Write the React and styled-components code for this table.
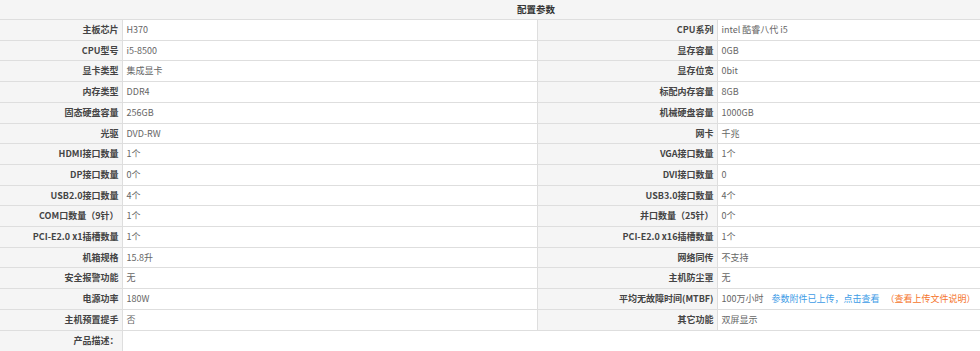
import React from "react";
import styled, { createGlobalStyle } from "styled-components";

const Global = createGlobalStyle`
  html, body { margin: 0; padding: 0; background: #fff; }
  body { font-family: "Noto Sans CJK SC", "Noto Sans", sans-serif; }
`;

const Page = styled.div`
  width: 100%;
  height: 351px;
  overflow: hidden;
`;

const Table = styled.table`
  width: 1072px;
  border-collapse: collapse;
  table-layout: fixed;
  font-size: 9px;
`;

const HeadCell = styled.th`
  height: 19px;
  padding: 0;
  background: #f5f5f5;
  border-bottom: 1px solid #dedede;
  color: #333;
  font-weight: bold;
  font-size: 9.5px;
  text-align: center;
  line-height: 19px;
`;

const Row = styled.tr`
  height: 20.7px;
`;

const Label = styled.th`
  padding: 0 3px 0 4px;
  background: #f5f5f5;
  border-bottom: 1px solid #dedede;
  border-right: 1px solid #dedede;
  color: #444;
  font-weight: bold;
  text-align: right;
  white-space: nowrap;
  line-height: 19.7px;
  height: 19.7px;
  box-sizing: border-box;
`;

const Value = styled.td`
  padding: 0 4px;
  background: #fff;
  border-bottom: 1px solid #dedede;
  border-right: ${(p) => (p.$last ? "none" : "1px solid #dedede")};
  color: #666;
  text-align: left;
  white-space: nowrap;
  line-height: 19.7px;
  height: 19.7px;
`;

const DescRow = styled.tr`
  height: 40px;
`;

const DescLabel = styled(Label)`
  vertical-align: top;
  border-bottom: none;
`;

const DescValue = styled(Value)`
  border-bottom: none;
`;

const Link = styled.a`
  color: #3d9be6;
  text-decoration: none;
  margin-left: 8px;
`;

const Note = styled.span`
  color: #f5742b;
  margin-left: 6px;
`;

const rows = [
  ["主板芯片", "H370", "CPU系列", "intel 酷睿八代 i5"],
  ["CPU型号", "i5-8500", "显存容量", "0GB"],
  ["显卡类型", "集成显卡", "显存位宽", "0bit"],
  ["内存类型", "DDR4", "标配内存容量", "8GB"],
  ["固态硬盘容量", "256GB", "机械硬盘容量", "1000GB"],
  ["光驱", "DVD-RW", "网卡", "千兆"],
  ["HDMI接口数量", "1个", "VGA接口数量", "1个"],
  ["DP接口数量", "0个", "DVI接口数量", "0"],
  ["USB2.0接口数量", "4个", "USB3.0接口数量", "4个"],
  ["COM口数量（9针）", "1个", "并口数量（25针）", "0个"],
  ["PCI-E2.0 x1插槽数量", "1个", "PCI-E2.0 x16插槽数量", "1个"],
  ["机箱规格", "15.8升", "网络同传", "不支持"],
  ["安全报警功能", "无", "主机防尘罩", "无"],
  ["电源功率", "180W", "平均无故障时间(MTBF)", "mtbf"],
  ["主机预置提手", "否", "其它功能", "双屏显示"],
];

function renderValue(v) {
  if (v === "mtbf") {
    return (
      <>
        100万小时
        <Link href="#">参数附件已上传，点击查看</Link>
        <Note>（查看上传文件说明）</Note>
      </>
    );
  }
  return v;
}

export default function App() {
  return (
    <Page>
      <Global />
      <Table>
        <colgroup>
          <col style={{ width: 122 }} />
          <col style={{ width: 415 }} />
          <col style={{ width: 180 }} />
          <col style={{ width: 355 }} />
        </colgroup>
        <thead>
          <tr>
            <HeadCell colSpan={4}>配置参数</HeadCell>
          </tr>
        </thead>
        <tbody>
          {rows.map((r) => (
            <Row key={r[0]}>
              <Label>{r[0]}</Label>
              <Value>{r[1]}</Value>
              <Label>{r[2]}</Label>
              <Value $last>{renderValue(r[3])}</Value>
            </Row>
          ))}
          <DescRow>
            <DescLabel>产品描述：</DescLabel>
            <DescValue colSpan={3} $last></DescValue>
          </DescRow>
        </tbody>
      </Table>
    </Page>
  );
}
